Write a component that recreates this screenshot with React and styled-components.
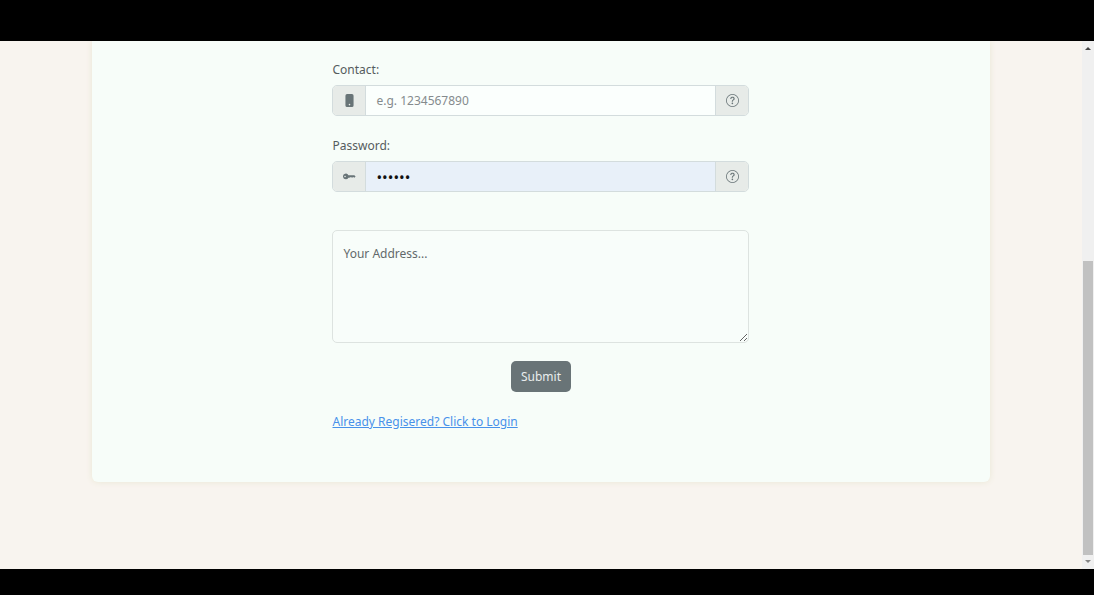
import React from "react";
import styled, { createGlobalStyle } from "styled-components";

const GlobalStyle = createGlobalStyle`
  *, *::before, *::after { box-sizing: border-box; }
  body {
    margin: 0;
    background: #000;
    color: #555c5e;
    font: 400 12px/20px "Noto Sans", "Open Sans", sans-serif;
  }
`;

const Screen = styled.div`
  display: flex;
  height: 100vh;
  padding: 41px 0 26px;
`;

const Page = styled.main`
  flex: 1;
  min-width: 0;
  overflow: hidden;
  background: #f8f4ef;
`;

const Card = styled.section`
  width: 83%;
  margin: 0 auto;
  padding: 19px 0 50px;
  border-radius: 0 0 6px 6px;
  background: #f7fdf9;
  box-shadow: 0 0 6px #e9e7d4;
`;

const Form = styled.form`
  display: flex;
  flex-direction: column;
  width: 417px;
  max-width: 92%;
  margin: 0 auto;
`;

const Field = styled.div`
  margin-bottom: 20px;
`;

const Label = styled.label`
  display: block;
  margin-bottom: 5px;
`;

const InputGroup = styled.div`
  display: flex;
  height: 31px;
  border: 1px solid #d3dcdd;
  border-radius: 5px;
  overflow: hidden;
`;

const Addon = styled.span`
  display: flex;
  flex: none;
  align-items: center;
  justify-content: center;
  width: 32px;
  background: #e7ebe8;
  color: #687477;
`;

const Input = styled.input`
  flex: 1;
  min-width: 0;
  padding: 0 10px;
  border: solid #d3dcdd;
  border-width: 0 1px;
  outline: 0;
  background: ${(p) => (p.$filled ? "#e8f0f9" : "#fbfffd")};
  color: #111;
  font: inherit;
  &::placeholder { color: #858b8d; opacity: 1; }
  &[type="password"] { font-size: 15px; }
`;

const Address = styled.textarea`
  display: block;
  height: 113px;
  margin: 18px 0;
  padding: 13px 10px;
  border: 1px solid #dde3e0;
  border-radius: 5px;
  outline: 0;
  background: #f8fdfa;
  resize: vertical;
  font: inherit;
  &::placeholder { color: #62696a; opacity: 1; }
`;

const Submit = styled.button`
  align-self: center;
  height: 31px;
  padding: 0 10px;
  border: 0;
  border-radius: 5px;
  background: #697477;
  color: #e9eded;
  font: inherit;
`;

const LoginLink = styled.a`
  align-self: flex-start;
  margin-top: 20px;
  color: #4891ea;
`;

const Scrollbar = styled.div`
  display: grid;
  grid-template-rows: 14px 206fr 294fr 14px;
  flex: none;
  width: 12px;
  padding-right: 1px;
  background: #f0f0f0;
`;

const Arrow = styled.svg`
  grid-row: ${(p) => (p.$down ? 4 : 1)};
  width: 11px;
  height: 14px;
  fill: ${(p) => (p.$down ? "#858585" : "#444")};
`;

const Thumb = styled.div`
  grid-row: 3;
  margin-left: 1px;
  background: #c1c1c1;
`;

const PhoneIcon = () => (
  <svg width="13" height="13" viewBox="0 0 16 16" fill="currentColor" aria-hidden="true">
    <path d="M3 2a2 2 0 0 1 2-2h6a2 2 0 0 1 2 2v12a2 2 0 0 1-2 2H5a2 2 0 0 1-2-2V2zm6 11a1 1 0 1 0-2 0 1 1 0 0 0 2 0z" />
  </svg>
);

const KeyIcon = () => (
  <svg width="13" height="13" viewBox="0 0 16 16" fill="currentColor" aria-hidden="true">
    <path d="M3.5 11.5a3.5 3.5 0 1 1 3.163-5H14L15.5 8 14 9.5l-1-1-1 1-1-1-1 1-1-1-1 1H6.663a3.5 3.5 0 0 1-3.163 2zM2.5 9a1 1 0 1 0 0-2 1 1 0 0 0 0 2z" />
  </svg>
);

const QuestionIcon = () => (
  <svg width="13" height="13" viewBox="0 0 16 16" fill="currentColor" aria-hidden="true">
    <path d="M8 15A7 7 0 1 1 8 1a7 7 0 0 1 0 14zm0 1A8 8 0 1 0 8 0a8 8 0 0 0 0 16z" />
    <path d="M5.255 5.786a.237.237 0 0 0 .241.247h.825c.138 0 .248-.113.266-.25.09-.656.54-1.134 1.342-1.134.686 0 1.314.343 1.314 1.168 0 .635-.374.927-.965 1.371-.673.489-1.206 1.06-1.168 1.987l.003.217a.25.25 0 0 0 .25.246h.811a.25.25 0 0 0 .25-.25v-.105c0-.718.273-.927 1.01-1.486.609-.463 1.244-.977 1.244-2.056 0-1.511-1.276-2.241-2.673-2.241-1.267 0-2.655.59-2.75 2.286zm1.557 5.763c0 .533.425.927 1.01.927.609 0 1.028-.394 1.028-.927 0-.552-.42-.94-1.029-.94-.584 0-1.009.388-1.009.94z" />
  </svg>
);

export default function App() {
  return (
    <>
      <GlobalStyle />
      <Screen>
        <Page>
          <Card>
            <Form onSubmit={(e) => e.preventDefault()}>
              <Field>
                <Label htmlFor="contact">Contact:</Label>
                <InputGroup>
                  <Addon><PhoneIcon /></Addon>
                  <Input id="contact" type="tel" placeholder="e.g. 1234567890" />
                  <Addon><QuestionIcon /></Addon>
                </InputGroup>
              </Field>
              <Field>
                <Label htmlFor="password">Password:</Label>
                <InputGroup>
                  <Addon><KeyIcon /></Addon>
                  <Input id="password" type="password" defaultValue="secret" $filled />
                  <Addon><QuestionIcon /></Addon>
                </InputGroup>
              </Field>
              <Address placeholder="Your Address..." aria-label="Your Address" />
              <Submit type="submit">Submit</Submit>
              <LoginLink href="#login">Already Regisered? Click to Login</LoginLink>
            </Form>
          </Card>
        </Page>
        <Scrollbar aria-hidden="true">
          <Arrow viewBox="0 0 11 14"><path d="M3 9l3-3 3 3z" /></Arrow>
          <Thumb />
          <Arrow $down viewBox="0 0 11 14"><path d="M3 5h6l-3 3z" /></Arrow>
        </Scrollbar>
      </Screen>
    </>
  );
}
